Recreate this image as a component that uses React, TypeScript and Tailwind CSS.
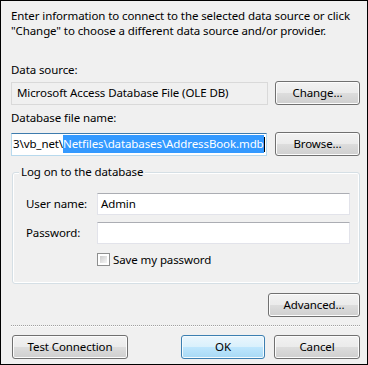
import React from "react";

const btn =
  "shrink-0 flex items-center justify-center h-[24px] rounded-[3px] border border-[#707070] bg-[linear-gradient(#f2f2f2_0%,#ebebeb_50%,#dddddd_50%,#cfcfcf_100%)] shadow-[inset_0_0_0_1px_#fcfcfc] text-black";

const okBtn =
  "shrink-0 flex items-center justify-center h-[24px] rounded-[3px] border border-[#3c7fb1] bg-[linear-gradient(#eaf6fd_0%,#d9f0fc_50%,#bee6fd_50%,#a7d9f5_100%)] shadow-[inset_0_0_0_1px_#f4fbfe] text-black";

const input =
  "h-[22px] bg-white border border-[#e2e3ea] border-t-[#abadb3] px-[3px] flex items-center";

export default function App() {
  return (
    <div
      className="w-[368px] h-[365px] border border-black bg-[#f0f0f0] flex flex-col pl-[10px] pr-[7px] text-[11.5px] tracking-[-0.1px] text-black overflow-hidden"
      style={{ fontFamily: '"Noto Sans", "Open Sans", sans-serif' }}
    >
      <p className="shrink-0 mt-[7px] leading-[15px]">
        Enter information to connect to the selected data source or click "Change" to choose a different data source and/or provider.
      </p>

      <div className="shrink-0 mt-[24px] leading-[15px]">Data source:</div>
      <div className="shrink-0 mt-[4px] flex items-center h-[24px]">
        <div className="w-[257px] h-[23px] border border-[#d9d9d9] bg-[#f0f0f0] flex items-center px-[5px] whitespace-nowrap">
          Microsoft Access Database File (OLE DB)
        </div>
        <button className={`${btn} ml-[7px] w-[85px]`}>Change...</button>
      </div>

      <div className="shrink-0 mt-[5px] leading-[15px]">Database file name:</div>
      <div className="shrink-0 mt-[7px] flex items-center h-[24px]">
        <div className="w-[256px] h-[23px] bg-white border border-[#b7d9ed] border-t-[#3d7bad] flex items-center pl-[1px] whitespace-nowrap overflow-hidden">
          <span>3\vb_net\</span>
          <span className="bg-[#3399ff] text-white">Netfiles\databases\AddressBook.mdb</span>
          <span className="w-[1px] h-[15px] bg-black" />
        </div>
        <button className={`${btn} ml-[8px] w-[85px]`}>Browse...</button>
      </div>

      <div className="shrink-0 relative mt-[16px] ml-[1px] h-[112px] rounded-[3px] border border-[#d5dfe5] shadow-[inset_0_0_0_1px_#ffffff] flex flex-col pl-[13px] pr-[9px] pt-[20px]">
        <span className="absolute left-[6px] top-[-9px] px-[2px] bg-[#f0f0f0] leading-[15px]">
          Log on to the database
        </span>
        <div className="flex items-center">
          <span className="w-[71px]">User name:</span>
          <div className={`${input} flex-1`}>Admin</div>
        </div>
        <div className="flex items-center mt-[7px]">
          <span className="w-[71px]">Password:</span>
          <div className={`${input} flex-1`} />
        </div>
        <div className="flex items-center mt-[8px] ml-[71px]">
          <span className="w-[13px] h-[13px] border border-[#8e8f8f] p-[2px] bg-white">
            <span className="block w-full h-full bg-[linear-gradient(135deg,#cbcbcb,#f6f6f6)]" />
          </span>
          <span className="ml-[3px] leading-[15px]">Save my password</span>
        </div>
      </div>

      <div className="shrink-0 mt-[9px] flex justify-end">
        <button className={`${btn} w-[92px]`}>Advanced...</button>
      </div>

      <div className="shrink-0 mt-[8px] h-[2px] border-t border-dotted border-[#a0a0a0] border-b border-b-white" />

      <div className="shrink-0 mt-[8px] flex items-center">
        <button className={`${btn} ml-[1px] w-[116px]`}>Test Connection</button>
        <button className={`${okBtn} ml-[53px] w-[84px]`}>OK</button>
        <button className={`${btn} ml-[9px] w-[86px]`}>Cancel</button>
      </div>
    </div>
  );
}
